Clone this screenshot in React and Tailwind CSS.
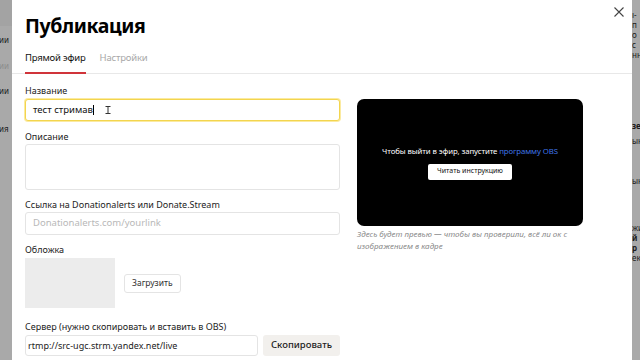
const FONT = { fontFamily: '"Noto Sans", "Open Sans", sans-serif' };

const Label = ({ children, className = '' }) => (
  <p className={`text-[9px] leading-[10px] text-[#222] whitespace-nowrap ${className}`}>{children}</p>
);

const SideStrip = ({ lines, className = '' }) => (
  <div className={`h-full bg-[#a9a9a9] overflow-hidden text-[8px] leading-[10px] text-[#1a1a1a] ${className}`}>
    {lines.map((l, i) => (
      <p key={i} className={l.cls}>{l.t}</p>
    ))}
  </div>
);

export default function App() {
  return (
    <div className="flex w-[640px] h-[360px] overflow-hidden bg-[#a9a9a9]" style={FONT}>
      {/* backdrop, left */}
      <div className="w-[12px] shrink-0 flex flex-col">
        <div className="h-[26px] bg-[#a3a3a3]" />
        <SideStrip
          className="flex-1"
          lines={[
            { t: 'ии', cls: 'mt-[9px] -ml-[1px]' },
            { t: 'ии', cls: 'mt-[16px] -ml-[1px] text-[#8c8c8c]' },
            { t: 'ии', cls: 'mt-[15px] -ml-[1px]' },
            { t: 'ия', cls: 'mt-[28px] -ml-[1px]' },
          ]}
        />
      </div>

      {/* modal */}
      <div className="w-[620px] shrink-0 bg-white flex flex-col">
        <div className="flex justify-between pl-[13px] pr-[8px]">
          <h1 className="pt-[14px] text-[19.5px] leading-[24px] font-bold text-black tracking-[-0.4px]">Публикация</h1>
          <svg className="mt-[7px] w-[10px] h-[10px]" viewBox="0 0 10 10" fill="none" stroke="#444" strokeWidth="1.1">
            <path d="M0.5 0.5 L9.5 9.5 M9.5 0.5 L0.5 9.5" />
          </svg>
        </div>

        <div className="flex gap-[14px] pl-[13px] mt-[13px] border-b border-[#e8e8e8] text-[9.5px] leading-[13px] tracking-[-0.2px]">
          <div className="pb-[8px] border-b-2 border-[#d0343a] -mb-px text-[#111]">Прямой эфир</div>
          <div className="text-[#a8a8a8]">Настройки</div>
        </div>

        <div className="flex gap-[17px] pl-[13px]">
          {/* form column */}
          <div className="w-[315px] shrink-0 pt-[12px]">
            <Label>Название</Label>
            <div className="mt-[3px] h-[22px] rounded-[3px] border border-[#f3d54e] bg-white shadow-[0_0_0_1px_#fbeaa0] flex items-center pl-[7px] text-[9.5px] text-[#111]">
              <span>тест стримав</span>
              <span className="w-px h-[10px] bg-black" />
              <svg className="ml-[11px] w-[6px] h-[8px]" viewBox="0 0 6 8" fill="none" stroke="#333" strokeWidth="1">
                <path d="M0.5 0.5 H5.5 M3 0.5 V7.5 M0.5 7.5 H5.5" />
              </svg>
            </div>

            <Label className="mt-[11px]">Описание</Label>
            <div className="mt-[2px] h-[46px] rounded-[3px] border border-[#e4e4e4]" />

            <Label className="mt-[10px]">Ссылка на Donationalerts или Donate.Stream</Label>
            <div className="mt-[2px] h-[23px] rounded-[3px] border border-[#e4e4e4] flex items-center pl-[7px] text-[9.5px] text-[#b8b8b8]">
              Donationalerts.com/yourlink
            </div>

            <Label className="mt-[10px]">Обложка</Label>
            <div className="mt-[3px] flex items-center gap-[9px]">
              <div className="w-[90px] h-[50px] bg-[#ececec]" />
              <button className="h-[19px] px-[7px] rounded-[3px] border border-[#e4e4e4] bg-white text-[8.5px] text-[#333]">
                Загрузить
              </button>
            </div>

            <Label className="mt-[14px]">Сервер (нужно скопировать и вставить в OBS)</Label>
            <div className="mt-[3px] flex gap-[5px]">
              <div className="w-[233px] h-[21px] rounded-[3px] border border-[#e4e4e4] flex items-center pl-[2px] text-[9px] text-[#222] whitespace-nowrap">
                rtmp://src-ugc.strm.yandex.net/live
              </div>
              <button className="flex-1 h-[21px] rounded-[3px] bg-[#f2f0ed] text-[9.5px] font-medium text-[#222]">
                Скопировать
              </button>
            </div>
          </div>

          {/* preview column */}
          <div className="w-[226px] shrink-0 pt-[25px]">
            <div className="h-[127px] rounded-[7px] bg-black flex flex-col items-center justify-center gap-[7px]">
              <p className="text-[7.8px] leading-[11px] text-white tracking-[-0.1px]">
                Чтобы выйти в эфир, запустите <span className="text-[#3f74e6]">программу OBS</span>
              </p>
              <button className="h-[16px] px-[9px] rounded-[2px] bg-white text-[7px] text-[#111]">
                Читать инструкцию
              </button>
            </div>
            <p className="mt-[2px] pr-[14px] text-[8px] leading-[12px] italic text-[#8a8a8a]">
              Здесь будет превью — чтобы вы проверили, всё ли ок с изображением в кадре
            </p>
          </div>
        </div>
      </div>

      {/* backdrop, right */}
      <SideStrip
        className="flex-1 text-[7px] leading-[10px]"
        lines={[
          { t: 'ı-п', cls: 'mt-[10px]' },
          { t: 'о с', cls: '' },
          { t: 'нн', cls: '' },
          { t: 'зе', cls: 'mt-[61px] font-bold text-[8px]' },
          { t: 'ын', cls: 'mt-[5px]' },
          { t: 'ын', cls: 'mt-[30px]' },
          { t: 'жи', cls: 'mt-[37px]' },
          { t: 'й р', cls: 'font-bold' },
          { t: 'ек', cls: '' },
        ]}
      />
    </div>
  );
}
